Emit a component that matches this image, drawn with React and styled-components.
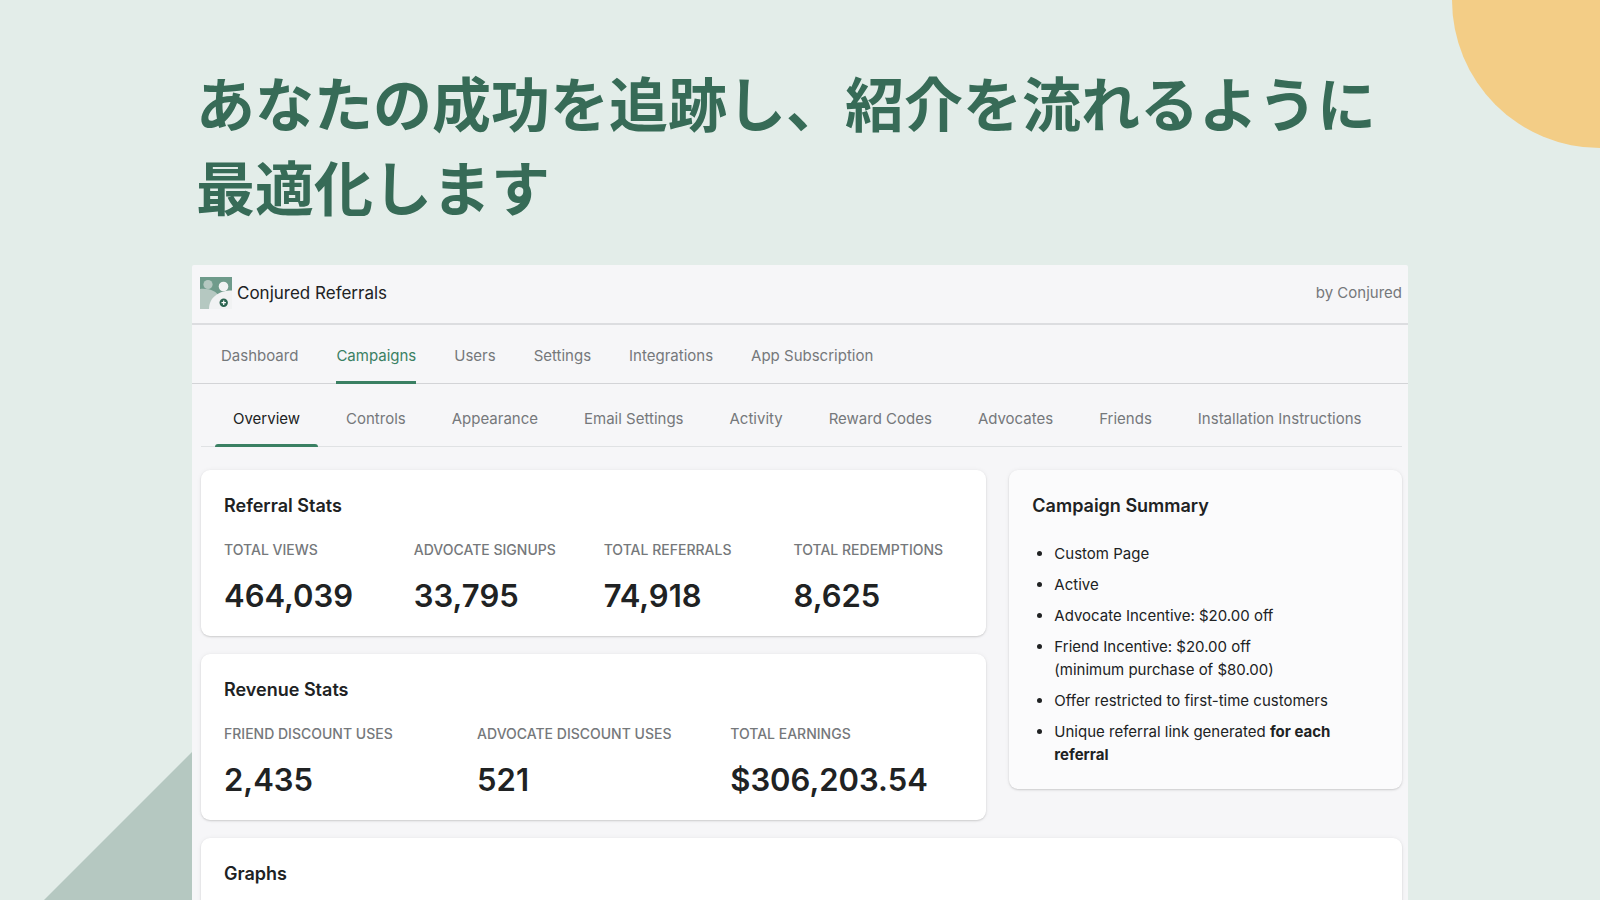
import React, { useState } from 'react';
import styled, { createGlobalStyle } from 'styled-components';

const colors = {
    mint: '#e3ede9',
    sage: '#b5c8c1',
    sand: '#f3cd86',
    forest: '#376b57',
    green: '#3a8063',
    ink: '#202223',
    muted: '#75787b',
    surface: '#f6f6f8',
    line: '#d3d4d7',
};

const GlobalStyle = createGlobalStyle`
  * {
    box-sizing: border-box;
  }

  body {
    margin: 0;
    background-color: ${colors.mint};
    color: ${colors.ink};
    font-family: Inter, "Noto Sans CJK JP", sans-serif;
    font-size: 15px;
  }
`;

const Slide = styled.main`
  position: relative;
  height: 100vh;
  padding: 60px 12% 0;
  overflow: hidden;
`;

const QuarterCircle = styled.div`
  position: absolute;
  top: 0;
  right: 0;
  width: 148px;
  height: 148px;
  border-bottom-left-radius: 100%;
  background-color: ${colors.sand};
`;

const Triangle = styled.div`
  position: absolute;
  bottom: 0;
  left: calc(12% - 148px);
  width: 148px;
  height: 148px;
  background-color: ${colors.sage};
  clip-path: polygon(100% 0, 100% 100%, 0 100%);
`;

const Headline = styled.h1`
  margin: 0 0 37px;
  padding-left: 4px;
  color: ${colors.forest};
  font-family: "Noto Sans CJK JP", sans-serif;
  font-size: 59px;
  font-weight: 700;
  line-height: 84px;
`;

const AppWindow = styled.div`
  position: relative;
  border-radius: 2px 2px 0 0;
  background-color: ${colors.surface};
`;

const Header = styled.header`
  display: flex;
  align-items: center;
  padding: 12px 6px 14px 8px;
  border-bottom: 2px solid #dcdde0;
`;

const AppName = styled.span`
  margin-left: 5px;
  font-size: 17px;
`;

const Author = styled.span`
  margin-left: auto;
  color: ${colors.muted};
  line-height: 20px;
`;

const Nav = styled.nav`
  display: flex;
  gap: 38px;
  height: 59px;
  padding: 0 29px;
  border-bottom: 1px solid ${colors.line};
`;

const NavLink = styled.a`
  display: flex;
  align-items: center;
  margin-bottom: -1px;
  padding-top: 4px;
  border-bottom: 3px solid ${props => (props.$active ? colors.green : 'transparent')};
  color: ${props => (props.$active ? colors.green : colors.muted)};
  text-decoration: none;
  white-space: nowrap;
`;

const Content = styled.div`
  padding: 0 6px 0 9px;
`;

const Tabs = styled.div`
  display: flex;
  gap: 10px;
  height: 63px;
  padding: 0 14px;
  border-bottom: 1px solid #e0e2e4;
`;

const Tab = styled.button`
  position: relative;
  margin: 0 0 -1px;
  padding: 6px 18px 0;
  border: 0;
  background: none;
  color: ${props => (props.$active ? colors.ink : colors.muted)};
  font: inherit;
  white-space: nowrap;
  cursor: pointer;

  &:after {
    content: '';
    position: absolute;
    right: 0;
    bottom: 0;
    left: 0;
    height: 3px;
    border-radius: 3px 3px 0 0;
    background-color: ${props => (props.$active ? colors.green : 'transparent')};
  }
`;

const Columns = styled.div`
  display: grid;
  grid-template-columns: 2fr 1fr;
  align-items: start;
  gap: 23px;
  margin-top: 23px;
`;

const Stack = styled.div`
  display: grid;
  gap: 18px;
`;

const Card = styled.section`
  padding: 23px;
  border-radius: 9px;
  background-color: ${props => (props.$subdued ? '#fbfbfc' : '#fff')};
  box-shadow: 0 0 5px rgba(23, 24, 24, 0.05), 0 1px 2px rgba(0, 0, 0, 0.15);
`;

const GraphsCard = styled(Card)`
  margin-top: 18px;
  min-height: 160px;
`;

const CardTitle = styled.h2`
  margin: 0;
  font-size: 18px;
  font-weight: 600;
  line-height: 26px;
`;

const StatGrid = styled.dl`
  display: grid;
  grid-template-columns: repeat(${props => props.$count}, 1fr);
  column-gap: 20px;
  margin: 21px 0 0;
`;

const StatLabel = styled.dt`
  color: ${colors.muted};
  font-size: 14px;
  font-weight: 500;
  line-height: 20px;
  text-transform: uppercase;
  white-space: nowrap;
`;

const StatValue = styled.dd`
  margin: 18px 0 0;
  font-size: 31px;
  font-weight: 600;
  line-height: 35px;
`;

const SummaryList = styled.ul`
  display: grid;
  gap: 8px;
  margin: 23px 0 0;
  padding-left: 22px;
  line-height: 23px;
`;

const navItems = ['Dashboard', 'Campaigns', 'Users', 'Settings', 'Integrations', 'App Subscription'];

const tabs = [
    'Overview',
    'Controls',
    'Appearance',
    'Email Settings',
    'Activity',
    'Reward Codes',
    'Advocates',
    'Friends',
    'Installation Instructions',
];

const referralStats = [
    { label: 'Total views', value: '464,039' },
    { label: 'Advocate signups', value: '33,795' },
    { label: 'Total referrals', value: '74,918' },
    { label: 'Total redemptions', value: '8,625' },
];

const revenueStats = [
    { label: 'Friend discount uses', value: '2,435' },
    { label: 'Advocate discount uses', value: '521' },
    { label: 'Total earnings', value: '$306,203.54' },
];

const Logo = () => (
    <svg width="32" height="32" viewBox="0 0 32 32" aria-hidden="true">
        <rect width="32" height="32" fill="#6f9b8b" />
        <path d="M0 12C9 11 17 14 19 20V32H0Z" fill="#b5c8c1" />
        <circle cx="8" cy="7.5" r="4.6" fill="#b5c8c1" />
        <path d="M9 32C9 21 18 13.5 32 13.5V32Z" fill="#f1f2f3" />
        <circle cx="23.5" cy="9.5" r="4.8" fill="#f1f2f3" />
        <circle cx="23.7" cy="25.7" r="4.2" fill="#2b6450" />
        <path d="M23.7 23.5V27.9M21.5 25.7H25.9" stroke="#fff" strokeWidth="1.2" />
    </svg>
);

const StatCard = ({ title, stats }) => (
    <Card>
        <CardTitle>{title}</CardTitle>
        <StatGrid $count={stats.length}>
            {stats.map(stat => (
                <div key={stat.label}>
                    <StatLabel>{stat.label}</StatLabel>
                    <StatValue>{stat.value}</StatValue>
                </div>
            ))}
        </StatGrid>
    </Card>
);

const App = () => {
    const [activeTab, setActiveTab] = useState('Overview');

    return (
        <>
            <GlobalStyle />
            <Slide>
                <QuarterCircle />
                <Triangle />
                <Headline lang="ja">あなたの成功を追跡し、紹介を流れるように最適化します</Headline>
                <AppWindow>
                    <Header>
                        <Logo />
                        <AppName>Conjured Referrals</AppName>
                        <Author>by Conjured</Author>
                    </Header>
                    <Nav>
                        {navItems.map(item => (
                            <NavLink key={item} href="#" $active={item === 'Campaigns'}>
                                {item}
                            </NavLink>
                        ))}
                    </Nav>
                    <Content>
                        <Tabs role="tablist">
                            {tabs.map(tab => (
                                <Tab
                                    key={tab}
                                    type="button"
                                    role="tab"
                                    aria-selected={tab === activeTab}
                                    $active={tab === activeTab}
                                    onClick={() => setActiveTab(tab)}
                                >
                                    {tab}
                                </Tab>
                            ))}
                        </Tabs>
                        <Columns>
                            <Stack>
                                <StatCard title="Referral Stats" stats={referralStats} />
                                <StatCard title="Revenue Stats" stats={revenueStats} />
                            </Stack>
                            <Card $subdued>
                                <CardTitle>Campaign Summary</CardTitle>
                                <SummaryList>
                                    <li>Custom Page</li>
                                    <li>Active</li>
                                    <li>Advocate Incentive: $20.00 off</li>
                                    <li>
                                        Friend Incentive: $20.00 off
                                        <br />
                                        (minimum purchase of $80.00)
                                    </li>
                                    <li>Offer restricted to first-time customers</li>
                                    <li>
                                        Unique referral link generated <strong>for each referral</strong>
                                    </li>
                                </SummaryList>
                            </Card>
                        </Columns>
                        <GraphsCard>
                            <CardTitle>Graphs</CardTitle>
                        </GraphsCard>
                    </Content>
                </AppWindow>
            </Slide>
        </>
    );
};

export default App;
